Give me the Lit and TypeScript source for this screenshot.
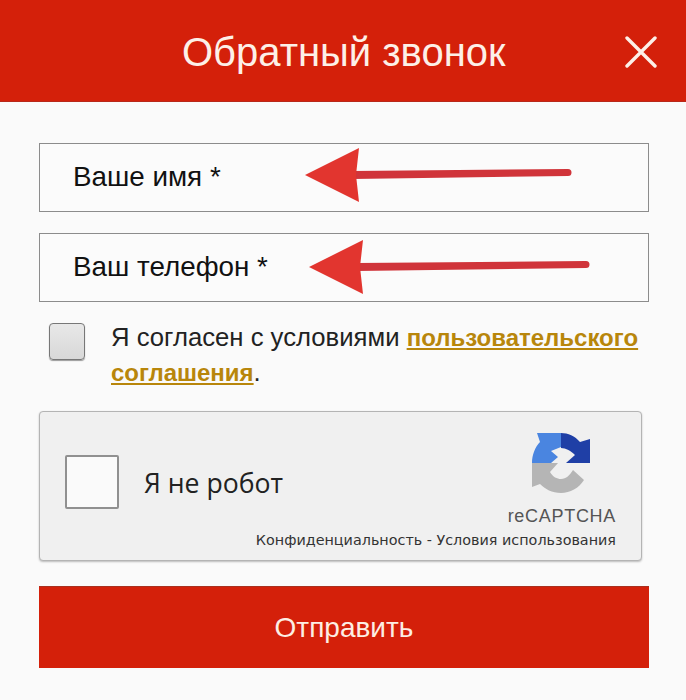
import { LitElement, html, css } from "lit";
import { customElement } from "lit/decorators.js";

@customElement("app-root")
export class AppRoot extends LitElement {
  static styles = css`
    :host { display: block; width: 686px; height: 700px; background: #fafafa; font-family: "Liberation Sans", Arial, sans-serif; overflow: hidden; }
    .head { height: 102px; box-sizing: border-box; background: #d4200a; border-bottom: 1px solid #b8281a; display: flex; align-items: center; position: relative; color: #fdf0e8; padding-left: 182px; }
    .title { font-size: 40px; line-height: 1; padding-top: 2px; }
    .close { position: absolute; left: 625px; top: 36px; width: 32px; height: 32px; }
    .form { padding: 41px 37px 0 39px; display: flex; flex-direction: column; }
    .field { position: relative; height: 69px; box-sizing: border-box; border: 1px solid #8c8c8c; background: #fbfbfb; display: flex; align-items: center; padding: 0 0 2px 33px; font-size: 27.8px; color: #111; }
    .field + .field { margin-top: 21px; }
    .arrow { position: absolute; top: 0; left: 0; width: 608px; height: 66px; }
    .agree { display: flex; margin-top: 21px; padding-left: 10px; }
    .box { width: 36px; height: 37px; box-sizing: border-box; flex: none; border: 1px solid #777; border-radius: 4px; background: linear-gradient(#e8e8e8, #d8d8d8); box-shadow: 0 1px 1px #999; margin-right: 26px; }
    .agree p { margin: -3px 0 0; font-size: 25.7px; line-height: 35px; color: #222; }
    .agree a { color: #b8860b; font-size: 24px; font-weight: bold; text-decoration: underline; }
    .cap { position: relative; width: 603px; height: 150px; box-sizing: border-box; margin-top: 21px; border: 1px solid #b4b4b4; border-radius: 4px; background: #f0f0f0; box-shadow: 0 1px 2px #bbb; display: flex; align-items: center; padding: 0 0 8px 25px; font-family: "Open Sans", sans-serif; }
    .cb { width: 54px; height: 54px; box-sizing: border-box; border: 2px solid #909090; background: #fafafa; border-radius: 2px; margin-right: 25px; flex: none; }
    .label { font-size: 26.6px; color: #222; padding-top: 2px; }
    .brand { position: absolute; right: 25px; top: 21px; display: flex; flex-direction: column; align-items: flex-end; }
    .logo { width: 60px; height: 60px; display: block; margin-right: 24px; }
    .rc { font-family: "Liberation Sans", sans-serif; font-size: 18px; color: #555; margin-top: 13px; letter-spacing: .7px; line-height: 20px; }
    .links { font-family: "DejaVu Sans", sans-serif; font-size: 14.35px; color: #333; margin-top: 5px; white-space: nowrap; line-height: 18px; }
    .send { margin-top: 25px; width: 610px; height: 82px; background: #d4200a; border-top: 1px solid #a8301f; box-sizing: border-box; display: flex; align-items: center; justify-content: center; color: #fdeee4; font-size: 28px; }
  `;

  arrow(tipX: number, neckX: number, endX: number, y: number) {
    return html`<svg class="arrow" viewBox="0 0 608 66">
      <path d="M${neckX - 6} ${y - 3} L${endX} ${y - 5} A3.5 3.5 0 0 1 ${endX} ${y + 2} L${neckX - 6} ${y + 5} Z" fill="#d0343a"/>
      <path d="M${tipX} ${y + 1} L${neckX} ${y - 26} L${neckX - 3} ${y + 1} L${neckX} ${y + 28} Z" fill="#e2352f"/>
    </svg>`;
  }

  render() {
    return html`
      <div class="head">
        <div class="title">Обратный звонок</div>
        <svg class="close" viewBox="0 0 32 32"><path d="M2 2 L30 30 M30 2 L2 30" stroke="#fdf0e8" stroke-width="3.4" stroke-linecap="round"/></svg>
      </div>
      <div class="form">
        <div class="field">Ваше имя *${this.arrow(265, 319, 528, 30)}</div>
        <div class="field">Ваш телефон *${this.arrow(269, 323, 546, 32)}</div>
        <div class="agree">
          <div class="box"></div>
          <p>Я согласен с условиями <a>пользовательского соглашения</a>.</p>
        </div>
        <div class="cap">
          <div class="cb"></div>
          <div class="label">Я не робот</div>
          <div class="brand">
            <svg class="logo" viewBox="0 0 60 60">
              <path d="M0 30 H26 L18 39 C21 44 25 46 29 46 C34 46 38 42 41 37 L52 47 C47 55 38 60 29 60 C20 60 13 56 8 51 L0 54 Z" fill="#b5b5b5"/>
              <path d="M0 30 C0 22 3 14 8 9 L5 0 H29 V14 L19 18 L26 24 L19 30 Z" fill="#4a85e0"/>
              <path d="M29 0 C36 0 43 3 48 9 L58 6 V30 H34 L43 22 C39 18 34 15 29 15 Z" fill="#1f3fa6"/>
            </svg>
            <div class="rc">reCAPTCHA</div>
            <div class="links">Конфиденциальность - Условия использования</div>
          </div>
        </div>
        <div class="send">Отправить</div>
      </div>
    `;
  }
}
